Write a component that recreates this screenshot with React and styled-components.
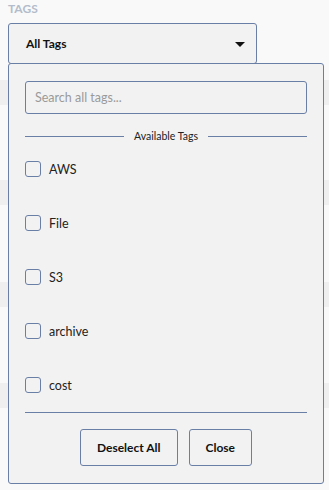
import React, { useState } from 'react';
import styled, { createGlobalStyle } from 'styled-components';

const GlobalStyle = createGlobalStyle`
    body {
        margin: 0;
        background: #f9f9f9;
        font-family: Lato, "Open Sans", sans-serif;
        color: #222;
    }
`

const tags = ['AWS', 'File', 'S3', 'archive', 'cost'];

export default function App() {
    var [checked, setChecked] = useState({});
    var [query, setQuery] = useState('');

    return (
        <Page>
            <GlobalStyle />
            <Backdrop>
                <Stripe top={80} />
                <Stripe top={180} />
                <Stripe top={282} />
                <Stripe top={383} />
            </Backdrop>
            <Field>
                <Label>TAGS</Label>
                <Select>
                    <span>All Tags</span>
                    <Caret />
                </Select>
                <Panel>
                    <Search placeholder="Search all tags..." value={query} onChange={(e) => { setQuery(e.target.value) }} />
                    <Divider>
                        <span>Available Tags</span>
                    </Divider>
                    <List>
                        {tags.map((t) => (
                            <Item key={t}>
                                <Box type="checkbox" checked={!!checked[t]} onChange={() => { setChecked({ ...checked, [t]: !checked[t] }) }} />
                                {t}
                            </Item>
                        ))}
                    </List>
                    <Footer>
                        <Button onClick={() => { setChecked({}) }}>Deselect All</Button>
                        <Button>Close</Button>
                    </Footer>
                </Panel>
            </Field>
        </Page>
    );
}

const Page = styled.div`
    position: relative;
    width: 329px;
    height: 490px;
    overflow: hidden;
`

const Backdrop = styled.div`
    position: absolute;
    inset: 0;
`

const Stripe = styled.div`
    position: absolute;
    left: 0;
    right: 0;
    top: ${(p) => p.top}px;
    height: 25px;
    background: #efefef;
`

const Field = styled.div`
    position: relative;
    padding: 2px 8px 0;
`

const Label = styled.div`
    font-size: 12px;
    font-weight: 700;
    color: #b3bccb;
    height: 21px;
    line-height: 14px;
`

const Select = styled.div`
    box-sizing: border-box;
    width: 249px;
    height: 41px;
    display: flex;
    align-items: center;
    justify-content: space-between;
    padding: 0 11px 0 17px;
    background: #f2f2f2;
    border: 1px solid #6a7fa6;
    border-radius: 3px;
    font-size: 12px;
    font-weight: 700;
    color: #111;
`

const Caret = styled.span`
    width: 0;
    height: 0;
    border-left: 5px solid transparent;
    border-right: 5px solid transparent;
    border-top: 5px solid #111;
    margin-top: 1px;
`

const Panel = styled.div`
    position: absolute;
    top: 63px;
    left: 8px;
    box-sizing: border-box;
    width: 316px;
    height: 421px;
    padding: 17px 16px 0;
    background: #f2f2f2;
    border: 1px solid #6a7fa6;
    border-radius: 3px;
    display: flex;
    flex-direction: column;
`

const Search = styled.input`
    box-sizing: border-box;
    width: 100%;
    height: 33px;
    padding: 0 9px;
    background: #f2f2f2;
    border: 1px solid #6a7fa6;
    border-radius: 3px;
    font-family: Lato, sans-serif;
    font-size: 12.5px;
    color: #222;
    outline: none;
    &::placeholder {
        color: #9a9a9a;
    }
`

const Divider = styled.div`
    display: flex;
    align-items: center;
    gap: 10px;
    margin-top: 16px;
    font-size: 10.5px;
    line-height: 13px;
    color: #222;
    &::before, &::after {
        content: '';
        flex: 1;
        height: 1px;
        background: #6a7fa6;
    }
`

const List = styled.div`
    display: flex;
    flex-direction: column;
    gap: 38px;
    margin-top: 18px;
`

const Item = styled.label`
    display: flex;
    align-items: center;
    gap: 8px;
    height: 16px;
    font-size: 12.5px;
    color: #222;
`

const Box = styled.input`
    appearance: none;
    box-sizing: border-box;
    width: 16px;
    height: 16px;
    margin: 0;
    border: 1px solid #6a7fa6;
    border-radius: 3px;
    background: #f2f2f2;
    &:checked {
        background: #6a7fa6;
    }
`

const Footer = styled.div`
    display: flex;
    justify-content: center;
    gap: 11px;
    margin-top: 19px;
    padding-top: 16px;
    border-top: 1px solid #6a7fa6;
`

const Button = styled.button`
    box-sizing: border-box;
    height: 37px;
    padding: 0 16px;
    background: #f2f2f2;
    border: 1px solid #6a7fa6;
    border-radius: 3px;
    font-family: Lato, sans-serif;
    font-size: 12px;
    font-weight: 700;
    color: #111;
`
